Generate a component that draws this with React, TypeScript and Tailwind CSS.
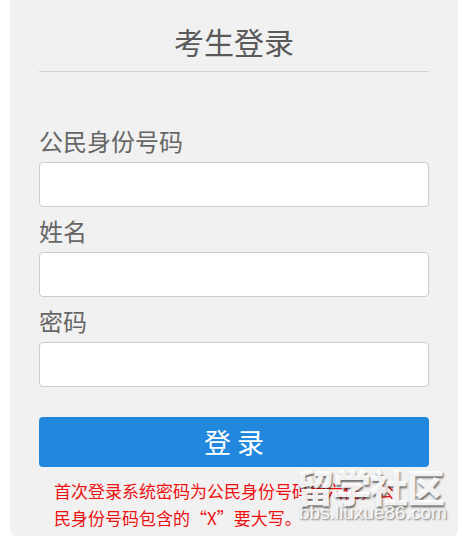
const fields = ["公民身份号码", "姓名", "密码"];

export default function App() {
  return (
    <div className="relative h-[538px] w-[462px] bg-white font-['Microsoft_YaHei','Noto_Sans_CJK_SC',sans-serif]">
      <div className="ml-[10px] w-[448px] rounded-b-[6px] bg-[#f1f1f1] px-[29px] pt-[21px] pb-[5px]">
        <h1 className="text-center text-[30px] leading-[40px] font-normal text-[#5a5a5a]">考生登录</h1>
        <div className="mt-[10px] h-px bg-[#d4d4d4]" />

        <div className="mt-[52px]">
          {fields.map((label, i) => (
            <div key={label} className={i > 0 ? "mt-[7px]" : ""}>
              <div className="mb-[4px] text-[24px] leading-[34px] text-[#666]">{label}</div>
              <input
                type={label === "密码" ? "password" : "text"}
                className="block h-[45px] w-full rounded-[4px] border border-[#cccccc] bg-white px-3 outline-none"
              />
            </div>
          ))}
        </div>

        <button className="mt-[30px] block h-[50px] w-full rounded-[4px] bg-[#2188de] text-[27px] leading-[50px] text-white">
          登&nbsp;录
        </button>

        <p className="mt-[10px] w-[352px] pl-[15px] text-[17px] leading-[27px] text-[#ee1111] box-content">
          首次登录系统密码为公民身份号码后六位，公民身份号码包含的“X”要大写。
        </p>
      </div>

      {/* watermark */}
      <div className="pointer-events-none absolute left-[296px] top-[466px] flex flex-col items-start">
        <span className="text-[38px] leading-[40px] font-black tracking-[-1px] text-white/90 [text-shadow:1px_2px_2px_rgba(0,0,0,0.55)]">
          留学社区
        </span>
        <span className="-mt-[3px] ml-[3px] font-['Liberation_Sans',sans-serif] text-[19px] leading-[20px] text-white/90 [text-shadow:1px_1px_2px_rgba(0,0,0,0.55)]">
          bbs.liuxue86.com
        </span>
      </div>
    </div>
  );
}
